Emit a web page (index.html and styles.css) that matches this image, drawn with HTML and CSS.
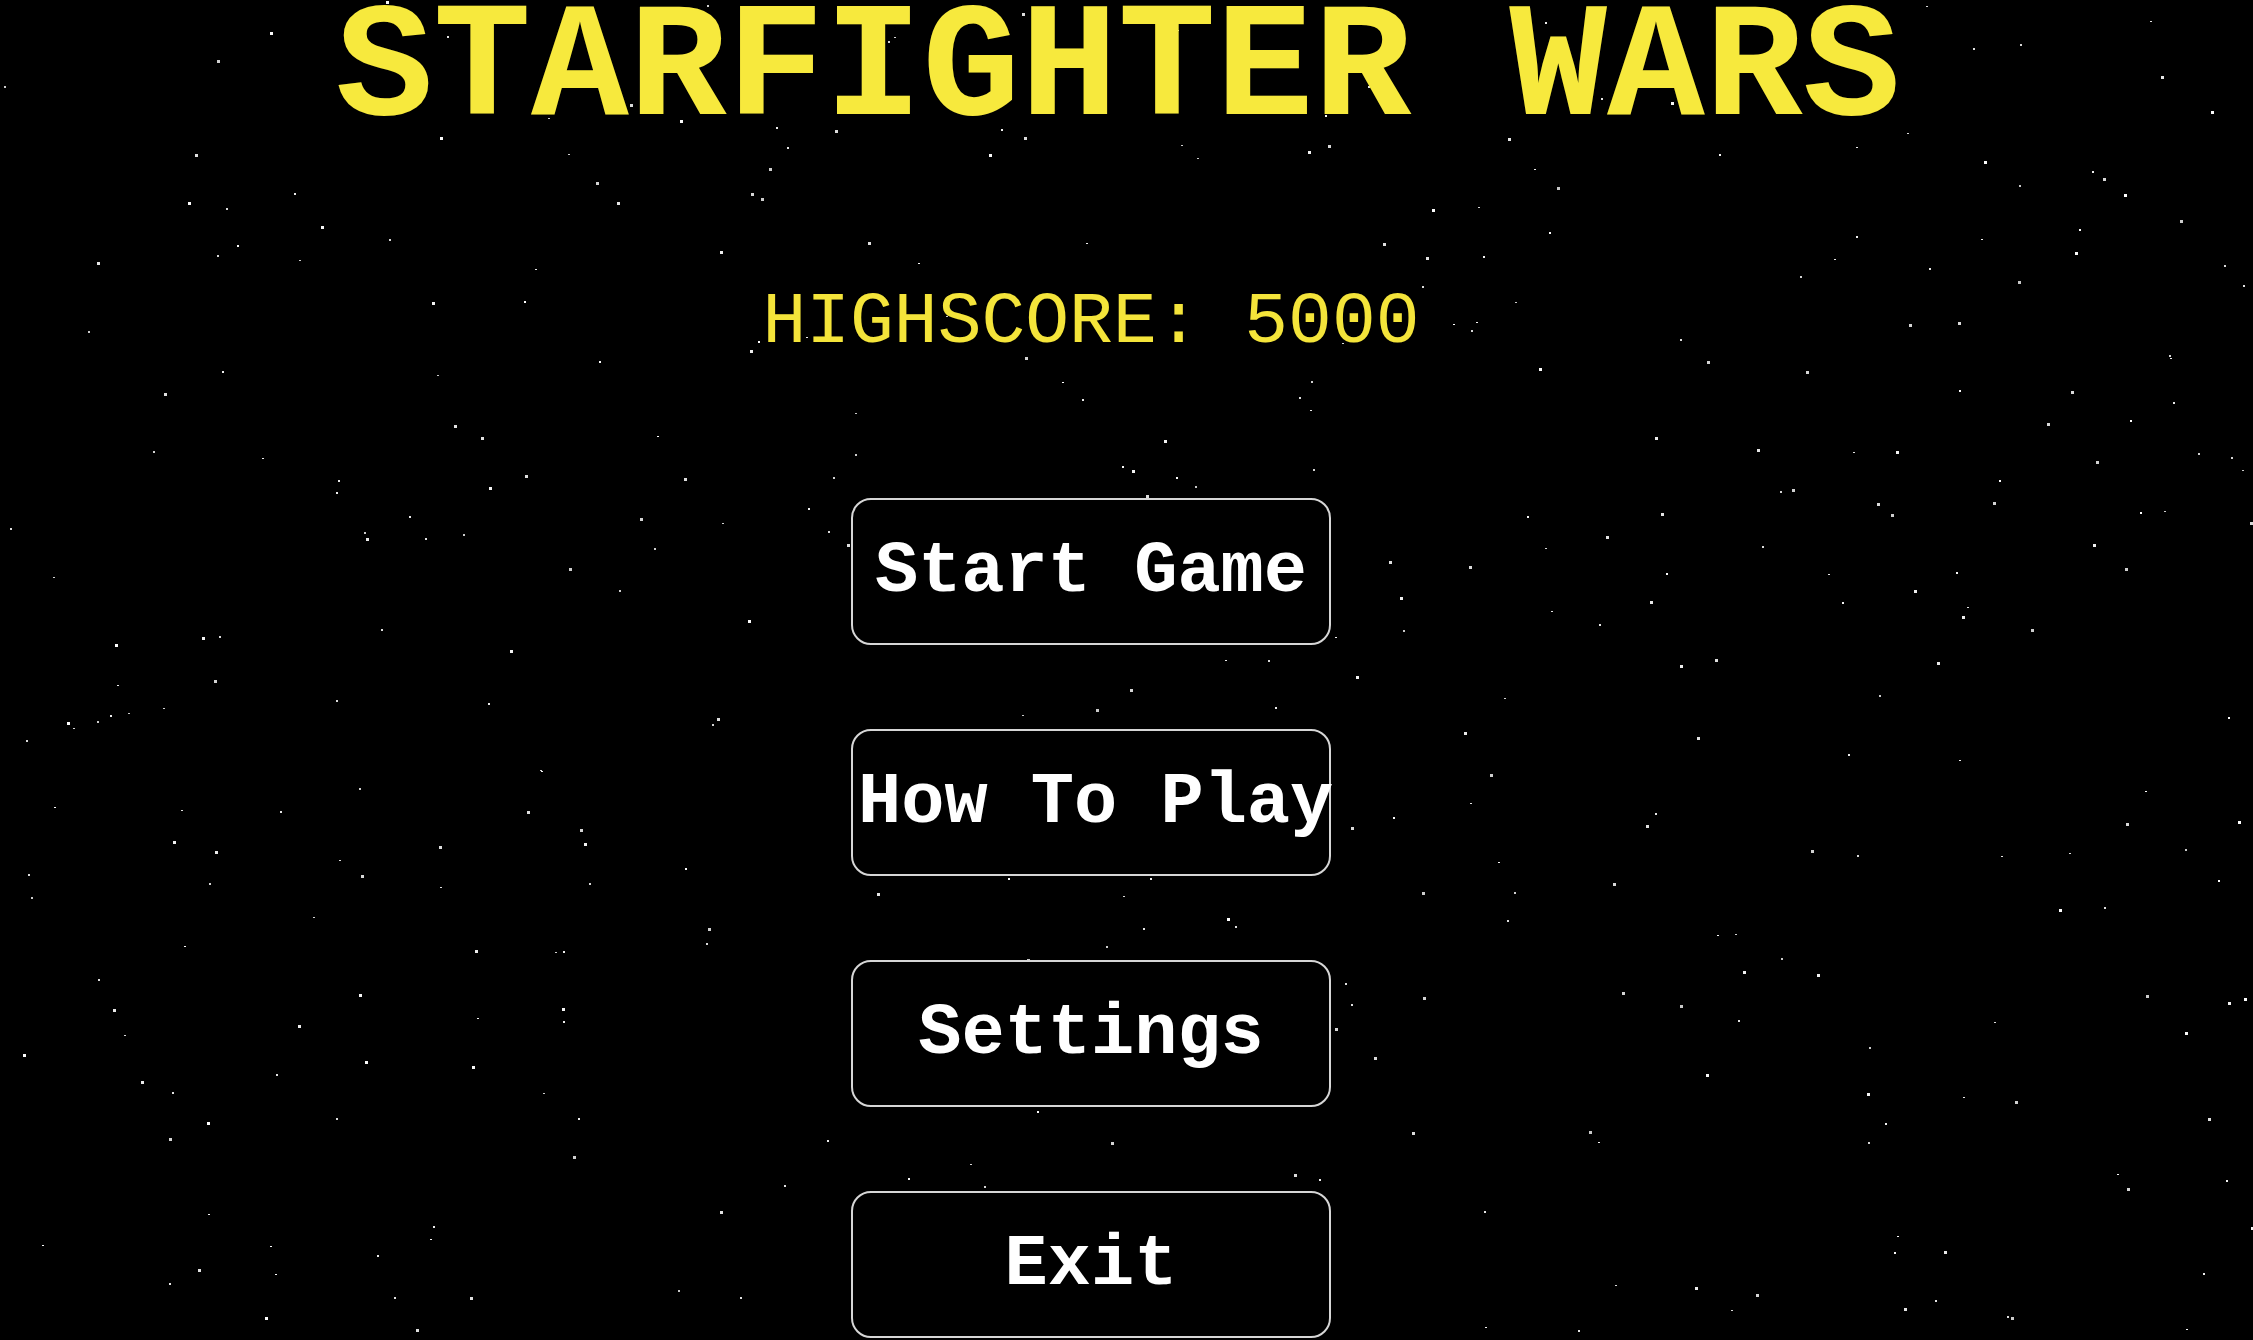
FILE: index.html
```html
<!DOCTYPE html>
<html lang="en">
<head>
<meta charset="utf-8">
<title>Starfighter Wars</title>
<link rel="stylesheet" href="styles.css">
</head>
<body>
<canvas id="starfield" class="starfield"></canvas>
<main class="menu">
  <h1 class="title">STARFIGHTER WARS</h1>
  <p class="highscore">HIGHSCORE: 5000</p>
  <nav class="buttons">
    <button class="btn" type="button">Start Game</button>
    <button class="btn" type="button">How To Play</button>
    <button class="btn" type="button">Settings</button>
    <button class="btn" type="button">Exit</button>
  </nav>
</main>
<script src="script.js"></script>
</body>
</html>
```

FILE: styles.css
```css
html, body {
  margin: 0;
  height: 100%;
  background: #000;
  overflow: hidden;
}

.starfield {
  position: fixed;
  left: 0;
  top: 0;
  z-index: 0;
}

.menu {
  position: relative;
  z-index: 1;
  display: flex;
  flex-direction: column;
  align-items: center;
  padding-right: 71px;
  font-family: "Liberation Mono", "Courier New", monospace;
}

.title {
  margin: -11px 0 0 54px;
  font-size: 163px;
  font-weight: 700;
  line-height: 1;
  color: #f7e93d;
  white-space: nowrap;
}

.highscore {
  margin: 134px 0 0;
  font-size: 73px;
  font-weight: 400;
  line-height: 1;
  color: #f4e43a;
  white-space: nowrap;
}

.buttons {
  margin-top: 139px;
  display: flex;
  flex-direction: column;
  gap: 84px;
}

.btn {
  box-sizing: border-box;
  width: 480px;
  height: 147px;
  padding: 0 5px;
  border: 2px solid #d6d6d6;
  border-radius: 20px;
  background: #000;
  color: #fff;
  font-family: "Liberation Mono", "Courier New", monospace;
  font-size: 72px;
  font-weight: 700;
  line-height: 1;
  white-space: nowrap;
  cursor: pointer;
}
```

FILE: script.js
```js
// Scatter small white stars over a full-window canvas.
(function () {
  var canvas = document.getElementById('starfield');
  var w = window.innerWidth;
  var h = window.innerHeight;
  canvas.width = w;
  canvas.height = h;
  var ctx = canvas.getContext('2d');

  var seed = 20240611;
  function rand() {
    seed = (seed * 1664525 + 1013904223) >>> 0;
    return seed / 4294967296;
  }

  ctx.fillStyle = '#000';
  ctx.fillRect(0, 0, w, h);

  var count = Math.round(w * h / 7000);
  for (var i = 0; i < count; i++) {
    var x = Math.floor(rand() * w);
    var y = Math.floor(rand() * h);
    var r = rand();
    var sw = r < 0.45 ? 3 : 2;
    var sh = r < 0.45 ? 3 : (r < 0.8 ? 2 : 1);
    var shade = 200 + Math.floor(rand() * 56);
    ctx.fillStyle = 'rgb(' + shade + ',' + shade + ',' + shade + ')';
    ctx.fillRect(x, y, sw, sh);
  }
})();
```
